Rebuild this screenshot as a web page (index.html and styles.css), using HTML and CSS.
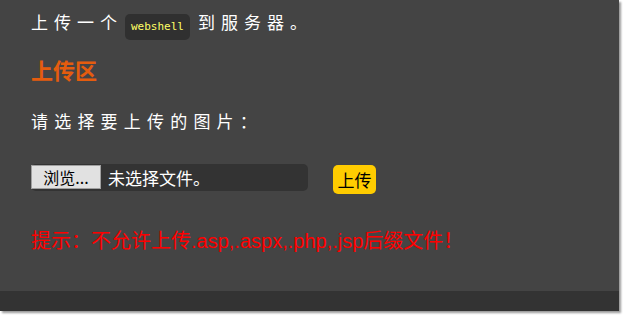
FILE: index.html
```html
<!DOCTYPE html>
<html lang="zh-CN">
<head>
<meta charset="utf-8">
<link rel="stylesheet" href="styles.css">
</head>
<body>
<div class="frame">
  <div class="content">
    <p class="intro">上传一个<code class="code">webshell</code>到服务器。</p>
    <h2 class="title">上传区</h2>
    <p class="prompt">请选择要上传的图片：</p>
    <div class="upload-row">
      <div class="file-input">
        <span class="browse">浏览...</span>
        <span class="file-name">未选择文件。</span>
      </div>
      <button class="submit">上传</button>
    </div>
    <p class="warning">提示：不允许上传.asp,.aspx,.php,.jsp后缀文件！</p>
  </div>
  <div class="footer"></div>
</div>
</body>
</html>
```

FILE: styles.css
```css
html, body {
  margin: 0;
  padding: 0;
  background: #ffffff;
}
body {
  width: 623px;
  height: 315px;
  overflow: hidden;
  font-family: "Noto Sans CJK SC", "Liberation Sans", sans-serif;
}
.frame {
  width: 619px;
  height: 311px;
  background: #444444;
  display: flex;
  flex-direction: column;
  box-shadow: 2px 2px 2px #9a9a9a;
}
.content {
  flex: 1;
  padding: 0 0 0 31px;
}
.intro {
  margin: 8px 0 0 0;
  font-size: 17px;
  line-height: 28px;
  letter-spacing: 6px;
  color: #ffffff;
}
.code {
  display: inline-block;
  font-family: "DejaVu Sans Mono", "Liberation Mono", monospace;
  font-size: 11px;
  letter-spacing: 0;
  line-height: 16px;
  color: #ffff66;
  background: #303030;
  border-radius: 5px;
  padding: 5px 6px;
  margin: 0 8px 0 2px;
  vertical-align: -1px;
}
.title {
  margin: 14px 0 0 0;
  font-size: 22px;
  line-height: 30px;
  font-weight: bold;
  color: #e55c0e;
}
.prompt {
  margin: 24px 0 0 0;
  font-size: 17px;
  line-height: 26px;
  letter-spacing: 6.2px;
  color: #ffffff;
}
.upload-row {
  margin-top: 30px;
  display: flex;
  align-items: flex-start;
  gap: 25px;
}
.file-input {
  width: 277px;
  height: 27px;
  background: #333333;
  border-radius: 5px;
  display: flex;
  align-items: center;
  box-sizing: border-box;
  padding-top: 1px;
}
.browse {
  width: 70px;
  height: 24px;
  box-sizing: border-box;
  background: #e1e1e1;
  border: 1px solid #a0a0a0;
  color: #000000;
  font-size: 16px;
  line-height: 22px;
  text-align: center;
  margin-top: -2px;
}
.file-name {
  margin-left: 7px;
  color: #ffffff;
  font-size: 17px;
  line-height: 22px;
}
.submit {
  width: 43px;
  height: 29px;
  margin-top: 1px;
  border: none;
  border-radius: 5px;
  background: #ffcc00;
  color: #000000;
  font-family: "Noto Sans CJK SC", sans-serif;
  font-size: 17px;
  padding: 0;
}
.warning {
  margin: 35px 0 0 0;
  color: #ff0000;
  font-family: "Liberation Sans", "Noto Sans CJK SC", sans-serif;
  font-size: 20px;
  line-height: 24px;
}
.footer {
  height: 20px;
  background: #333333;
}
```
